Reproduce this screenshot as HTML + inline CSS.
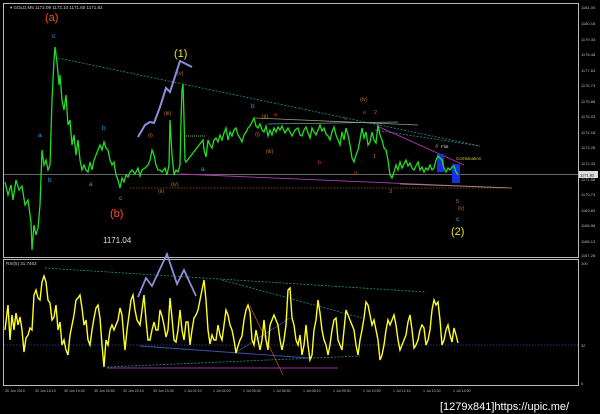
<!DOCTYPE html>
<html><head><meta charset="utf-8"><style>
html,body{margin:0;padding:0;background:#000;width:600px;height:414px;overflow:hidden}
svg{display:block}
text{font-family:"Liberation Sans",sans-serif}
</style></head><body>
<svg width="600" height="414" viewBox="0 0 600 414" xmlns="http://www.w3.org/2000/svg">
<rect width="600" height="414" fill="#000"/>
<!-- frames -->
<rect x="3.5" y="3.5" width="575" height="254" fill="none" stroke="#bbb" stroke-width="1"/>
<rect x="3.5" y="259.5" width="575" height="126" fill="none" stroke="#bbb" stroke-width="1"/>
<text x="10" y="9" font-size="4.5" fill="#ccc">▾ GOLD,M5  1172.09 1172.10 1171.60 1171.82</text>
<text x="6" y="265" font-size="4.5" fill="#ccc">RSI(5) 31.7463</text>
<!-- price axis -->
<g font-size="4" fill="#bbb">
<text x="581" y="9">1181.00</text><text x="581" y="25">1180.18</text><text x="581" y="41">1179.33</text>
<text x="581" y="56">1178.48</text><text x="581" y="72">1177.63</text><text x="581" y="87">1176.73</text>
<text x="581" y="103">1175.88</text><text x="581" y="118">1175.03</text><text x="581" y="134">1174.18</text>
<text x="581" y="149">1173.28</text><text x="581" y="165">1172.43</text><text x="581" y="181">1171.58</text>
<text x="581" y="196">1170.73</text><text x="581" y="212">1169.83</text><text x="581" y="227">1168.98</text>
<text x="581" y="243">1168.13</text><text x="581" y="257">1167.28</text>
<text x="581" y="265">100</text><text x="581" y="347">32</text><text x="581" y="385">0</text>
</g>
<rect x="579" y="171" width="19" height="7" fill="#ddd"/>
<text x="580" y="176.5" font-size="4" fill="#000">1171.82</text>
<!-- price line -->
<line x1="4" y1="174.5" x2="578" y2="174.5" stroke="#888" stroke-width="0.8"/>
<!-- trendlines main -->
<line x1="58" y1="58" x2="480" y2="146" stroke="#2a8f8f" stroke-width="0.8" stroke-dasharray="2,1.5"/>
<line x1="375" y1="130" x2="480" y2="146" stroke="#2a8f8f" stroke-width="0.8" stroke-dasharray="2,1.5"/>
<line x1="180" y1="174" x2="510" y2="188" stroke="#b03fb0" stroke-width="0.9"/>
<line x1="400" y1="184" x2="512" y2="188" stroke="#a0a060" stroke-width="0.8"/>
<line x1="130" y1="188" x2="510" y2="188" stroke="#b05020" stroke-width="0.8" stroke-dasharray="1.5,1.5"/>
<line x1="255" y1="118" x2="418" y2="125" stroke="#9a9a70" stroke-width="0.8"/>
<line x1="268" y1="124" x2="398" y2="122" stroke="#6aa0b0" stroke-width="0.8"/>
<line x1="377" y1="126" x2="464" y2="165" stroke="#c030c0" stroke-width="0.9"/>
<line x1="186" y1="136" x2="205" y2="136" stroke="#8f8" stroke-width="0.8" stroke-dasharray="1,1"/>
<!-- blue boxes -->
<rect x="437" y="154" width="7" height="18" fill="#1a2ee0"/>
<rect x="452" y="164" width="8" height="19" fill="#1a2ee0"/>
<!-- green price -->
<polyline fill="none" stroke="#22dd22" stroke-width="1.3" points="5,182 8,195 11,185 13,200 16,180 19,190 22,186 25,205 28,200 31,222 32,250 34,225 36,235 38,228 40,205 41,178 42,150 44,165 46,160 48,170 50,165 52,100 54,60 55,47 57,62 59,85 60,75 62,100 64,110 66,95 68,125 70,120 72,145 74,135 76,155 78,140 80,160 82,170 84,165 86,170 88,172 90,162 92,170 94,160 96,155 98,150 100,145 102,150 104,142 106,148 108,150 110,160 112,165 114,162 116,175 118,180 120,188 122,178 124,182 126,175 128,177 130,172 132,170 135,174 138,168 140,176 142,170 145,168 148,165 150,160 152,150 154,155 156,165 158,170 160,170 162,172 165,168 167,175 169,165 170,120 171,138 172,155 174,175 176,170 178,172 180,165 181,120 182,90 183,84 184,118 185,160 186,162 203,140 204,150 206,157 208,140 210,145 212,148 214,140 216,138 218,142 220,135 222,140 224,133 226,128 228,140 230,132 232,136 234,130 236,128 238,135 240,138 242,142 244,135 246,132 248,128 250,126 252,122 254,118 256,126 258,128 260,124 262,130 264,132 266,126 268,136 270,130 272,135 274,128 276,132 278,127 280,130 282,126 285,133 288,128 290,132 292,136 295,130 298,128 300,135 302,136 304,130 306,127 308,133 310,138 312,128 314,132 316,135 318,130 320,125 322,131 324,128 326,134 328,136 330,140 332,132 334,127 336,135 338,140 340,145 342,132 344,140 346,128 348,135 350,145 352,158 354,162 356,155 358,150 360,140 362,128 364,138 366,132 368,145 370,142 372,132 374,140 376,143 378,125 380,135 382,140 384,148 386,150 388,160 390,175 392,178 394,172 396,165 398,170 400,162 402,168 404,164 406,160 408,166 410,163 412,168 414,170 416,166 418,162 420,170 422,167 424,172 426,168 428,170 430,165 432,170 434,168 436,160 438,156 440,158 442,160 444,168 446,172 448,168 450,170 452,167 454,166 456,172 458,175"/>
<!-- purple arrows main -->
<polyline fill="none" stroke="#8e8ed8" stroke-width="2" points="138,137 145,125 150,122 154,123 160,107 166,88 170,92 180,61 192,67"/>
<!-- labels main -->
<g font-size="6.5" fill="#29a3e6">
<text x="52" y="38">c</text><text x="38" y="137">a</text><text x="48" y="182">b</text><text x="102" y="130">b</text>
<text x="89" y="186">a</text><text x="119" y="200">c</text><text x="201" y="171">a</text><text x="251" y="108">b</text>
<text x="456" y="221">c</text>
</g>
<text x="45" y="21" font-size="11" fill="#ff4b1a">(a)</text>
<text x="110" y="217" font-size="11" fill="#ff4b1a">(b)</text>
<text x="174" y="57" font-size="11" fill="#e8e020">(1)</text>
<text x="451" y="235" font-size="11" fill="#e8e020">(2)</text>
<text x="103" y="243" font-size="8" fill="#ddd">1171.04</text>
<g font-size="5.5" fill="#c07020">
<text x="177" y="75">(v)</text><text x="164" y="115">(iii)</text><text x="148" y="137">(i)</text>
<text x="171" y="186">(iv)</text><text x="158" y="193">(ii)</text><text x="262" y="118">(ii)</text>
<text x="255" y="136">(i)</text><text x="266" y="153">(iii)</text><text x="360" y="101">(iv)</text>
<text x="458" y="210">(v)</text><text x="374" y="114">2</text><text x="373" y="158">1</text>
<text x="389" y="193">3</text><text x="435" y="148">4</text><text x="456" y="203">5</text>
</g>
<g font-size="5.5" fill="#d04020">
<text x="274" y="116">a</text><text x="344" y="120">c</text><text x="363" y="114">e</text>
<text x="318" y="164">b</text><text x="354" y="175">d</text>
</g>
<text x="441" y="148" font-size="4.5" fill="#ccc">Flat</text>
<text x="456" y="160" font-size="4.5" fill="#c0c040">Combination</text>
<!-- RSI lines -->
<line x1="45" y1="268" x2="425" y2="292" stroke="#2a8f8f" stroke-width="0.8" stroke-dasharray="2,1.5"/>
<line x1="222" y1="280" x2="362" y2="318" stroke="#2a8f8f" stroke-width="0.8" stroke-dasharray="2,1.5"/>
<line x1="107" y1="367" x2="360" y2="356" stroke="#2a8f8f" stroke-width="0.8" stroke-dasharray="2,1.5"/>
<line x1="4" y1="345" x2="578" y2="345" stroke="#3a4a9a" stroke-width="0.8" stroke-dasharray="1.5,1.5"/>
<line x1="140" y1="346" x2="310" y2="358" stroke="#4050b0" stroke-width="0.9"/>
<line x1="107" y1="368" x2="338" y2="368" stroke="#a030a0" stroke-width="0.9"/>
<line x1="250" y1="306" x2="283" y2="375" stroke="#b05020" stroke-width="0.8"/>
<line x1="235" y1="353" x2="290" y2="318" stroke="#4060b0" stroke-width="0.7"/>
<polyline fill="none" stroke="#8e8ed8" stroke-width="1.8" points="138,297 146,278 152,286 167,254 177,284 184,270 196,296"/>
<polyline fill="none" stroke="#ffff20" stroke-width="1.4" points="5,330 8,305 10,340 12,315 14,330 16,313 18,325 20,317 22,330 24,352 26,338 28,335 30,328 32,330 34,295 36,290 38,298 40,300 42,282 44,276 46,282 48,300 50,303 52,320 54,317 56,305 58,330 60,322 62,345 64,340 66,350 68,355 70,335 72,325 74,315 76,300 78,298 80,295 82,308 84,325 86,320 88,340 90,345 92,330 94,318 96,308 98,305 100,318 102,345 104,367 106,340 108,345 110,330 112,325 114,330 116,325 118,320 120,308 122,315 124,340 125,350 127,330 129,315 131,300 133,295 135,310 137,320 140,325 142,310 144,295 146,320 148,340 150,340 152,330 154,322 156,330 158,330 160,310 162,316 164,325 166,337 168,330 170,298 172,318 174,340 176,342 178,330 180,310 182,330 184,340 186,322 188,322 190,345 192,330 194,318 196,315 198,310 200,300 202,290 204,280 206,300 208,330 210,344 212,335 214,340 216,340 218,325 220,335 222,340 224,325 226,310 228,315 230,325 232,330 234,340 236,353 238,346 240,340 242,336 244,320 246,310 248,305 250,312 252,340 254,345 256,330 258,340 260,350 262,340 264,320 266,340 268,350 270,325 272,320 274,315 276,320 278,325 280,340 282,350 284,340 286,325 288,290 290,288 292,318 294,325 296,340 298,345 300,335 302,355 304,345 306,325 308,345 310,360 312,355 314,330 316,320 318,300 320,313 322,330 324,340 326,345 328,355 330,345 332,330 334,320 336,318 338,340 340,345 342,350 344,330 346,310 348,315 350,320 352,325 354,330 356,345 358,355 360,340 362,330 364,318 366,302 368,305 370,315 372,325 374,320 376,330 378,340 380,360 382,355 384,345 386,330 388,320 390,325 392,320 394,315 396,325 398,340 400,350 402,345 404,340 406,335 408,322 410,315 412,330 414,348 416,345 418,340 420,330 422,325 424,328 426,345 428,340 430,330 432,310 434,300 436,305 438,302 440,320 442,345 444,340 446,330 448,325 450,335 452,342 454,328 456,335 458,343"/>
<!-- time axis -->
<g font-size="3.6" fill="#bbb">
<text x="5" y="392">30 Jun 2015</text><text x="35" y="392">30 Jun 18:10</text><text x="64" y="392">30 Jun 19:30</text>
<text x="94" y="392">30 Jun 20:50</text><text x="123" y="392">30 Jun 22:10</text><text x="153" y="392">30 Jun 23:30</text>
<text x="184" y="392">1 Jul 02:10</text><text x="213" y="392">1 Jul 04:00</text><text x="243" y="392">1 Jul 05:30</text>
<text x="273" y="392">1 Jul 06:50</text><text x="303" y="392">1 Jul 08:10</text><text x="333" y="392">1 Jul 09:30</text>
<text x="363" y="392">1 Jul 10:50</text><text x="393" y="392">1 Jul 12:10</text><text x="423" y="392">1 Jul 13:30</text>
<text x="453" y="392">1 Jul 14:50</text>
</g>
<text x="440" y="410" font-size="11" fill="#fff" font-family="Liberation Mono, monospace">[1279x841]https://upic.me/</text>
</svg>
</body></html>
